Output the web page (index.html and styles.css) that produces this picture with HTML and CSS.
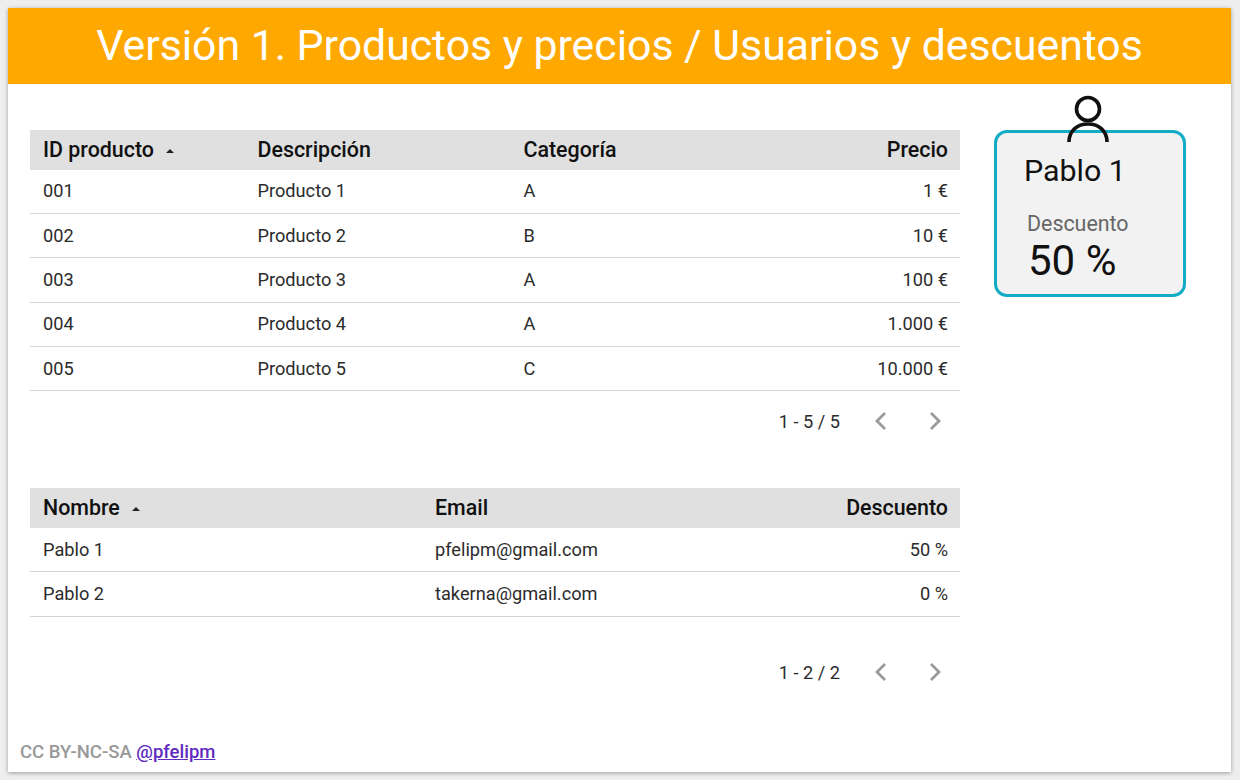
FILE: index.html
```html
<!DOCTYPE html>
<html lang="es">
<head>
<meta charset="utf-8">
<title>Productos y precios</title>
<link rel="stylesheet" href="styles.css">
</head>
<body>
<div class="page">
  <header class="banner">Versión 1. Productos y precios / Usuarios y descuentos</header>
  <div class="content">
    <main class="tables">
      <section class="block block-products">
        <div class="row head products">
          <div class="cell">ID producto<span class="sort"></span></div>
          <div class="cell">Descripción</div>
          <div class="cell">Categoría</div>
          <div class="cell num">Precio</div>
        </div>
        <div class="row products"><div class="cell">001</div><div class="cell">Producto 1</div><div class="cell">A</div><div class="cell num">1 €</div></div>
        <div class="row products"><div class="cell">002</div><div class="cell">Producto 2</div><div class="cell">B</div><div class="cell num">10 €</div></div>
        <div class="row products"><div class="cell">003</div><div class="cell">Producto 3</div><div class="cell">A</div><div class="cell num">100 €</div></div>
        <div class="row products"><div class="cell">004</div><div class="cell">Producto 4</div><div class="cell">A</div><div class="cell num">1.000 €</div></div>
        <div class="row products"><div class="cell">005</div><div class="cell">Producto 5</div><div class="cell">C</div><div class="cell num">10.000 €</div></div>
        <div class="pager">
          <span class="range">1 - 5 / 5</span>
          <svg class="chev" viewBox="0 0 14 20"><path d="M11 2 3 10l8 8"/></svg>
          <svg class="chev" viewBox="0 0 14 20"><path d="m3 2 8 8-8 8"/></svg>
        </div>
      </section>
      <section class="block block-users">
        <div class="row head users">
          <div class="cell">Nombre<span class="sort"></span></div>
          <div class="cell">Email</div>
          <div class="cell num">Descuento</div>
        </div>
        <div class="row users"><div class="cell">Pablo 1</div><div class="cell">pfelipm@gmail.com</div><div class="cell num">50 %</div></div>
        <div class="row users"><div class="cell">Pablo 2</div><div class="cell">takerna@gmail.com</div><div class="cell num">0 %</div></div>
        <div class="pager pager-users">
          <span class="range">1 - 2 / 2</span>
          <svg class="chev" viewBox="0 0 14 20"><path d="M11 2 3 10l8 8"/></svg>
          <svg class="chev" viewBox="0 0 14 20"><path d="m3 2 8 8-8 8"/></svg>
        </div>
      </section>
    </main>
    <aside class="side">
      <div class="card">
        <svg class="avatar" viewBox="0 0 44 48"><circle cx="22" cy="14" r="11.5"/><path d="M3 47c0-11 8-18 19-18s19 7 19 18"/></svg>
        <div class="card-name">Pablo 1</div>
        <div class="card-label">Descuento</div>
        <div class="card-value">50 %</div>
      </div>
    </aside>
  </div>
  <footer class="credit">CC BY-NC-SA <a href="#">@pfelipm</a></footer>
</div>
</body>
</html>
```
FILE: styles.css
```css
html, body { margin: 0; height: 100%; }
body {
  background: #eeeeee;
  padding: 8px 9px 8px 8px;
  box-sizing: border-box;
  font-family: Roboto, "Liberation Sans", sans-serif;
  color: #222;
  overflow: hidden;
}
.page {
  height: 764px;
  background: #fff;
  box-shadow: 0 1px 4px rgba(0, 0, 0, .35);
  display: flex;
  flex-direction: column;
}
.banner {
  height: 76px;
  flex: none;
  background: #ffa800;
  color: #fff;
  font-size: 42.75px;
  line-height: 74px;
  text-align: center;
  white-space: nowrap;
}
.content { flex: 1; display: flex; align-items: flex-start; }
.tables { width: 930px; margin-left: 22px; flex: none; padding-top: 46px; }
.block-users { margin-top: 37px; }
.row {
  display: grid;
  align-items: center;
  height: 44.4px;
  box-sizing: border-box;
  border-bottom: 1px solid #d4d4d4;
  font-size: 18.2px;
  color: #2b2b2b;
}
.products { grid-template-columns: 214.5px 266px 1fr 200px; }
.users { grid-template-columns: 392px 1fr 200px; }
.row.head {
  height: 39.5px;
  background: #e0e0e0;
  border-bottom: 0;
  font-size: 21.4px;
  font-weight: 500;
  color: #111;
}
.cell { padding: 0 12px 1px 13px; white-space: nowrap; }
.num { text-align: right; }
.sort {
  display: inline-block;
  width: 0;
  height: 0;
  margin-left: 12px;
  vertical-align: 4px;
  border-left: 4.5px solid transparent;
  border-right: 4.5px solid transparent;
  border-bottom: 4.5px solid #222;
}
.pager {
  height: 60px;
  display: flex;
  align-items: center;
  justify-content: flex-end;
  padding-right: 11px;
  font-size: 18.2px;
  color: #2b2b2b;
}
.pager-users { height: 111px; }
.range { margin-right: 27px; }
.chev { width: 28px; height: 20px; fill: none; stroke: #9b9b9b; stroke-width: 2.8; }
.chev + .chev { margin-left: 26px; }
.side { flex: none; padding: 45px 0 0 34px; }
.card {
  position: relative;
  width: 192px;
  height: 167px;
  box-sizing: border-box;
  margin-top: 1px;
  background: #f2f2f2;
  border: 3.5px solid #12acc6;
  border-radius: 13px;
  padding: 20px 0 0 27px;
}
.avatar {
  position: absolute;
  top: -38px;
  left: 69px;
  width: 44px;
  height: 48px;
  fill: none;
  stroke: #111;
  stroke-width: 3.6;
}
.card-name { font-size: 30.4px; line-height: 36px; color: #111; }
.card-label { font-size: 21.4px; line-height: 26px; color: #666; margin: 22px 0 0 3px; }
.card-value { font-size: 42px; line-height: 48px; color: #111; margin: 0 0 0 4px; }
.credit {
  margin-top: auto;
  padding: 0 0 8px 12px;
  font-size: 18.5px;
  line-height: 24px;
  font-weight: 500;
  color: #999;
}
.credit a { color: #5f2bc0; }
```
